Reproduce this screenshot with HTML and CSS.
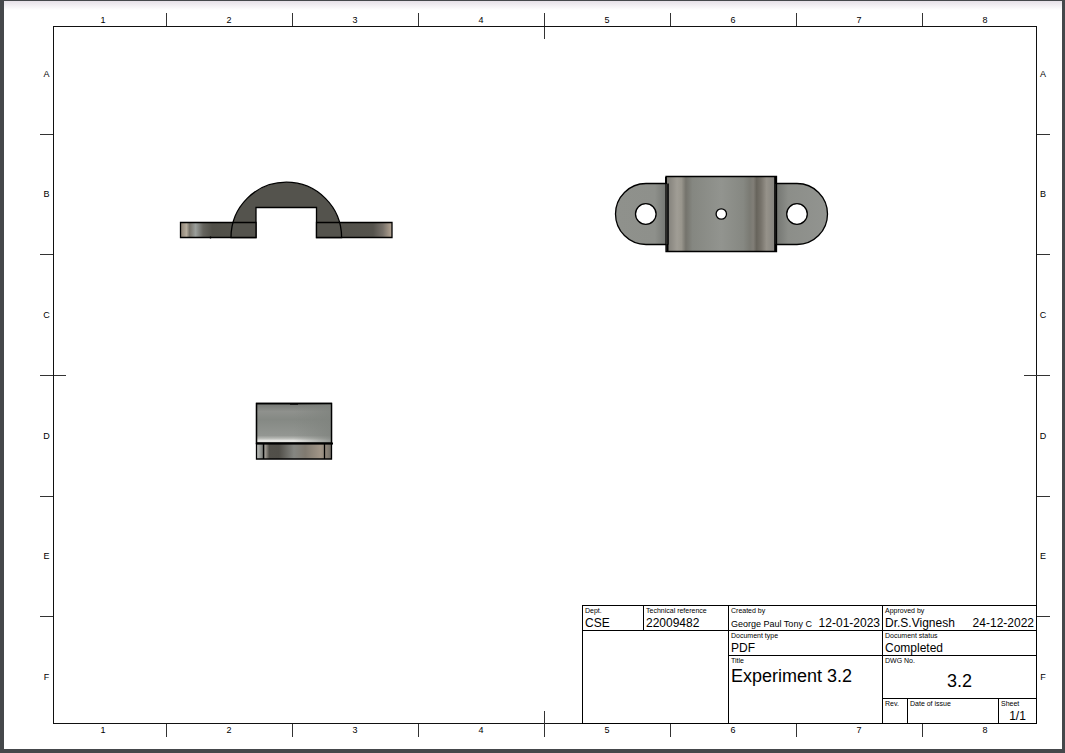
FILE: index.html
```html
<!DOCTYPE html>
<html lang="en">
<head>
<meta charset="utf-8">
<meta name="viewport" content="width=device-width, initial-scale=1">
<title>Experiment 3.2</title>
<link rel="stylesheet" href="styles.css">
</head>
<body class="viewer">
<main class="sheet">
  <div class="ruler ruler-x ruler-top"><span>1</span><span>2</span><span>3</span><span>4</span><span class="middle">5</span><span>6</span><span>7</span><span>8</span></div>
  <div class="ruler ruler-y ruler-left"><span>A</span><span>B</span><span>C</span><span class="middle">D</span><span>E</span><span>F</span></div>
  <section class="frame">
    <svg class="drawing" viewBox="54 27 982 696" role="img" aria-label="Front, top and side views of the bracket">
      <defs>
        <linearGradient id="wingLeft"><stop offset="0" stop-color="#8b8072"/><stop offset=".08" stop-color="#b5ac9d"/><stop offset=".12" stop-color="#77736a"/><stop offset=".2" stop-color="#9b9f9c"/><stop offset=".3" stop-color="#65645e"/><stop offset=".42" stop-color="#504f48"/><stop offset="1" stop-color="#54534d"/></linearGradient>
        <linearGradient id="wingRight"><stop offset="0" stop-color="#504f49"/><stop offset=".75" stop-color="#55534d"/><stop offset=".88" stop-color="#77716a"/><stop offset="1" stop-color="#b5a594"/></linearGradient>
        <linearGradient id="lobeLeft"><stop offset="0" stop-color="#8f918c"/><stop offset=".75" stop-color="#8e908b"/><stop offset="1" stop-color="#71736f"/></linearGradient>
        <linearGradient id="lobeRight"><stop offset="0" stop-color="#71736f"/><stop offset=".25" stop-color="#8c8e89"/><stop offset="1" stop-color="#929490"/></linearGradient>
        <linearGradient id="barrel"><stop offset="0" stop-color="#7d7b75"/><stop offset=".1" stop-color="#a09d95"/><stop offset=".14" stop-color="#99968d"/><stop offset=".18" stop-color="#74736c"/><stop offset=".24" stop-color="#858781"/><stop offset=".5" stop-color="#92948f"/><stop offset=".7" stop-color="#868882"/><stop offset=".76" stop-color="#7a7a73"/><stop offset=".79" stop-color="#817e77"/><stop offset=".82" stop-color="#67645c"/><stop offset=".86" stop-color="#77736b"/><stop offset=".91" stop-color="#96928a"/><stop offset="1" stop-color="#81807b"/></linearGradient>
        <linearGradient id="dome" x1="0" y1="0" x2="0" y2="1"><stop offset="0" stop-color="#747773"/><stop offset=".2" stop-color="#8f918d"/><stop offset=".4" stop-color="#858984"/><stop offset=".8" stop-color="#939692"/><stop offset=".87" stop-color="#b5b7b3"/><stop offset=".94" stop-color="#f0f0ed"/><stop offset="1" stop-color="#a9aba6"/></linearGradient>
        <linearGradient id="domeShade"><stop offset="0" stop-color="#7f837e" stop-opacity="0"/><stop offset=".5" stop-color="#7f837e" stop-opacity="0"/><stop offset="1" stop-color="#7f837e" stop-opacity=".8"/></linearGradient>
        <linearGradient id="base"><stop offset="0" stop-color="#c5c8c4"/><stop offset=".1" stop-color="#6e706c"/><stop offset=".12" stop-color="#9b968e"/><stop offset=".17" stop-color="#52504a"/><stop offset=".3" stop-color="#514f49"/><stop offset=".5" stop-color="#858681"/><stop offset=".65" stop-color="#807a70"/><stop offset=".85" stop-color="#a19587"/><stop offset=".92" stop-color="#91877b"/><stop offset="1" stop-color="#706d66"/></linearGradient>
      </defs>

      <g class="edges">
        <path fill="url(#wingLeft)" d="M180.5 222.5H256V237.5H180.5Z"/>
        <path fill="url(#wingRight)" d="M316.5 222.5H392V237.5H316.5Z"/>
        <path fill="#54534d" d="M231 237.5A55.3 55.3 0 0 1 341.6 237.5H316.5V207.5H256V237.5Z"/>
        <path d="M233 222.5H256M316.5 222.5H339.5M210.5 236.5V238.5"/>
      </g>

      <g class="edges">
        <path fill="url(#lobeLeft)" d="M668 183.5H646A30.3 30.3 0 0 0 646 244.5H668Z"/>
        <path fill="url(#lobeRight)" d="M775 183.5H797A30.3 30.3 0 0 1 797 244.5H775Z"/>
        <path fill="url(#barrel)" d="M666 176.5H776.5V251.5H666Z"/>
        <path d="M668 183.5V244.5M775 176.5V251.5" stroke-width="1.6"/>
        <path d="M666 177V184M667.5 244V252M776 177V184M776 244V252" stroke-width="2"/>
        <circle class="hole" cx="645.8" cy="214" r="10.3"/>
        <circle class="hole" cx="797" cy="214" r="10.3"/>
        <circle class="hole" cx="721.3" cy="214" r="5.2"/>
      </g>

      <g class="edges">
        <path fill="url(#dome)" d="M256.5 403.5H331.5V443.5H256.5Z"/>
        <path fill="url(#domeShade)" d="M256.5 403.5H331.5V443.5H256.5Z"/>
        <path fill="url(#base)" d="M256.5 443.5H331.5V459H256.5Z"/>
        <path d="M263.5 443.5V459M324.5 443.5V459"/>
        <path d="M256 443.5H333" stroke-width="1.8"/>
        <path d="M290 404H298"/>
      </g>
    </svg>

    <dl class="title-block">
      <div class="cell"><dt>Dept.</dt><dd>CSE</dd></div>
      <div class="cell"><dt>Technical reference</dt><dd>22009482</dd></div>
      <div class="cell"><dt>Created by</dt><dd class="signed"><span class="author">George Paul Tony C</span><time datetime="2023-01-12">12-01-2023</time></dd></div>
      <div class="cell wide"><dt>Approved by</dt><dd class="signed"><span>Dr.S.Vignesh</span><time datetime="2022-12-24">24-12-2022</time></dd></div>
      <div class="cell blank"></div>
      <div class="cell"><dt>Document type</dt><dd>PDF</dd></div>
      <div class="cell wide"><dt>Document status</dt><dd>Completed</dd></div>
      <div class="cell name"><dt>Title</dt><dd>Experiment 3.2</dd></div>
      <div class="cell wide number"><dt>DWG No.</dt><dd>3.2</dd></div>
      <div class="cell"><dt>Rev.</dt><dd></dd></div>
      <div class="cell"><dt>Date of issue</dt><dd></dd></div>
      <div class="cell page"><dt>Sheet</dt><dd>1/1</dd></div>
    </dl>
  </section>
  <div class="ruler ruler-y ruler-right"><span>A</span><span>B</span><span>C</span><span class="middle">D</span><span>E</span><span>F</span></div>
  <div class="ruler ruler-x ruler-bottom"><span>1</span><span>2</span><span>3</span><span>4</span><span class="middle">5</span><span>6</span><span>7</span><span>8</span></div>
</main>
</body>
</html>
```
FILE: styles.css
```css
* {
  box-sizing: border-box;
}

.viewer {
  display: flex;
  min-height: 100vh;
  margin: 0;
  padding: 1px 3px 4px 4px;
  background: #45484b;
  color: #000;
  font-family: "Liberation Sans", Arial, sans-serif;
}

.sheet {
  flex: 1;
  display: grid;
  grid-template-columns: 13px 1fr 13px;
  grid-template-rows: 13px 1fr 13px;
  padding: 12px 12px 12px 36px;
  background: linear-gradient(#e6e0e8, #fff 9px);
}

/* Zone rulers */
.ruler {
  display: grid;
  font-size: 9px;
  line-height: 13px;
  text-align: center;
}

.ruler span {
  position: relative;
}

.ruler-x {
  grid-column: 1 / 4;
  grid-template-columns: repeat(8, 1fr);
  margin-right: 2px;
}

.ruler-y {
  grid-row: 1 / 4;
  grid-template-rows: repeat(6, 1fr);
}

.ruler-y span {
  display: flex;
  align-items: center;
  justify-content: center;
  padding-top: 2px;
}

.ruler-top {
  grid-row: 1;
  line-height: 15px;
}

.ruler-bottom { grid-row: 3; }
.ruler-left { grid-column: 1; }

.ruler-right {
  grid-column: 3;
  margin-right: 1px;
}

.ruler span + span::before {
  content: "";
  position: absolute;
  top: 0;
  left: 0;
  background: #333;
}

.ruler-x span + span::before {
  width: 1px;
  height: 13px;
}

.ruler-y span + span::before {
  width: 13px;
  height: 1px;
}

.ruler-x .middle.middle::before { height: 26px; }
.ruler-y .middle.middle::before { width: 26px; }
.ruler-bottom .middle.middle::before { top: -13px; }
.ruler-right .middle.middle::before { left: -13px; }

/* Drawing area */
.frame {
  grid-column: 2;
  grid-row: 2;
  position: relative;
  display: flex;
  align-items: flex-end;
  justify-content: flex-end;
  border: 1px solid #111;
}

.drawing {
  position: absolute;
  inset: 0;
  width: 100%;
  height: 100%;
}

.edges {
  fill: none;
  stroke: #000;
  stroke-width: 1.3;
}

.hole {
  fill: #fff;
}

/* Title block */
.title-block {
  position: relative;
  display: grid;
  grid-template-columns: 61px 85px 154px 25px 91px 38px;
  grid-template-rows: 25px 25px 43px 25px;
  margin: 0 -1px -1px 0;
  border: solid #000;
  border-width: 1px 0 0 1px;
  background: #fff;
}

.cell {
  display: flex;
  flex-direction: column;
  padding: 1px 2px 0;
  border: solid #000;
  border-width: 0 1px 1px 0;
  white-space: nowrap;
}

.cell dt {
  font-size: 7px;
  line-height: 8px;
}

.cell dd {
  margin: 0;
  font-size: 12px;
  line-height: 17px;
}

.wide { grid-column: span 3; }

.blank {
  grid-column: 1 / 3;
  grid-row: 2 / 5;
}

.name { grid-row: 3 / 5; }

.signed {
  display: flex;
  align-items: baseline;
  justify-content: space-between;
}

.author { font-size: 9px; }

.name dd {
  font-size: 18px;
  line-height: 23px;
}

.number dd {
  font-size: 18px;
  line-height: 33px;
  text-align: center;
}

.page dd { text-align: center; }
```
